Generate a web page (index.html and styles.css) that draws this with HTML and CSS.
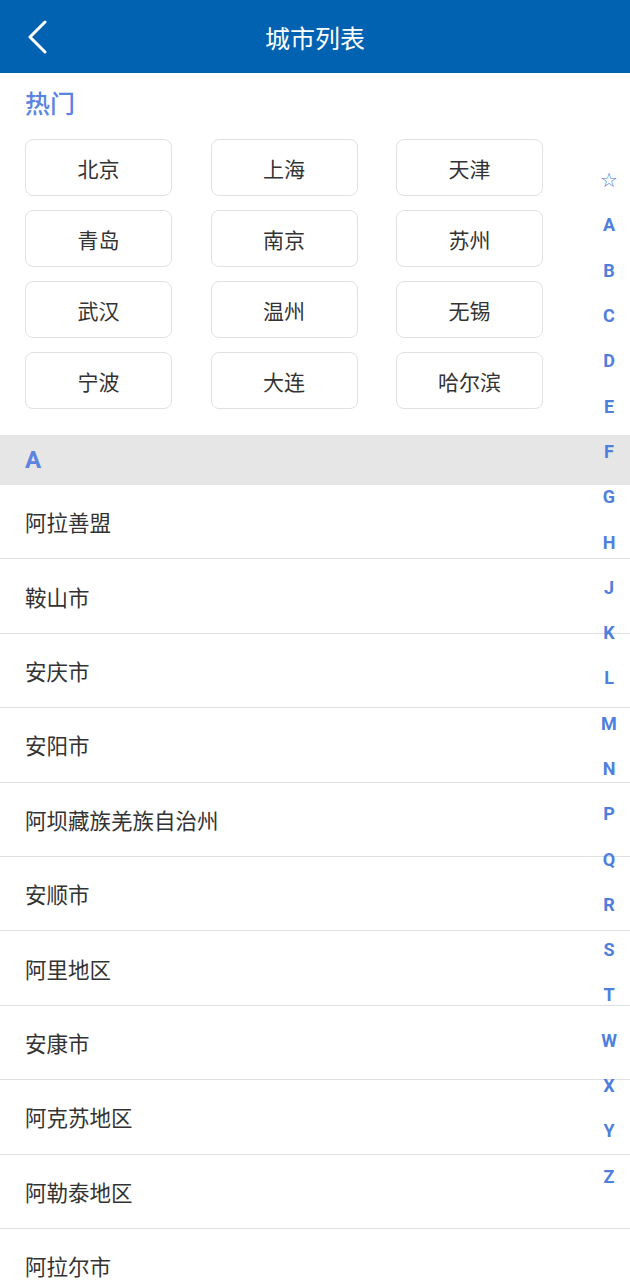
FILE: index.html
```html
<!DOCTYPE html>
<html lang="zh-CN">
<head>
<meta charset="utf-8">
<title>城市列表</title>
<link rel="stylesheet" href="styles.css">
</head>
<body>
<header class="topbar">
  <svg class="back" width="24" height="34" viewBox="0 0 24 34"><path d="M19 2 L4 17 L19 32" fill="none" stroke="#fff" stroke-width="3" stroke-linecap="round" stroke-linejoin="round"/></svg>
  <h1 class="title">城市列表</h1>
</header>
<section class="hot">
  <h2 class="hot-title">热门</h2>
  <div class="hot-grid">
    <div class="chip">北京</div><div class="chip">上海</div><div class="chip">天津</div>
    <div class="chip">青岛</div><div class="chip">南京</div><div class="chip">苏州</div>
    <div class="chip">武汉</div><div class="chip">温州</div><div class="chip">无锡</div>
    <div class="chip">宁波</div><div class="chip">大连</div><div class="chip">哈尔滨</div>
  </div>
</section>
<div class="group">A</div>
<ul class="list">
  <li>阿拉善盟</li>
  <li>鞍山市</li>
  <li>安庆市</li>
  <li>安阳市</li>
  <li>阿坝藏族羌族自治州</li>
  <li>安顺市</li>
  <li>阿里地区</li>
  <li>安康市</li>
  <li>阿克苏地区</li>
  <li>阿勒泰地区</li>
  <li>阿拉尔市</li>
</ul>
<nav class="index">
  <span class="star">☆</span><span>A</span><span>B</span><span>C</span><span>D</span><span>E</span><span>F</span><span>G</span><span>H</span><span>J</span><span>K</span><span>L</span><span>M</span><span>N</span><span>P</span><span>Q</span><span>R</span><span>S</span><span>T</span><span>W</span><span>X</span><span>Y</span><span>Z</span>
</nav>
</body>
</html>
```
FILE: styles.css
```css
* { box-sizing: border-box; }
html, body { margin: 0; padding: 0; }
body {
  width: 630px;
  height: 1280px;
  overflow: hidden;
  background: #fff;
  font-family: "Noto Sans CJK SC", "Noto Sans", sans-serif;
  color: #333;
  position: relative;
}
.topbar {
  height: 73px;
  background: #0062b1;
  display: flex;
  align-items: center;
  justify-content: center;
  position: relative;
}
.back {
  position: absolute;
  left: 26px;
  top: 20px;
}
.title {
  margin: 0;
  font-size: 25px;
  font-weight: 400;
  color: #fff;
  line-height: 30px;
}
.hot {
  padding: 14px 0 26px 25px;
}
.hot-title {
  margin: 0 0 22px;
  font-size: 25px;
  line-height: 30px;
  font-weight: 500;
  color: #5b84e0;
}
.hot-grid {
  display: grid;
  grid-template-columns: repeat(3, 147px);
  grid-auto-rows: 57px;
  column-gap: 38.5px;
  row-gap: 14px;
}
.chip {
  border: 1.5px solid #e1e1e1;
  border-radius: 8px;
  display: flex;
  align-items: center;
  justify-content: center;
  font-size: 21px;
  color: #333;
}
.group {
  height: 50px;
  background: #e6e6e6;
  padding-left: 25px;
  display: flex;
  align-items: center;
  font-family: "Roboto", "Liberation Sans", sans-serif;
  font-weight: 700;
  font-size: 24px;
  color: #5b84e0;
}
.list {
  list-style: none;
  margin: 0;
  padding: 0;
}
.list li {
  height: 74.4px;
  border-bottom: 1px solid #e0e0e0;
  padding-left: 25px;
  display: flex;
  align-items: center;
  font-size: 21.5px;
  color: #333;
}
.index {
  position: absolute;
  top: 157px;
  right: 1px;
  width: 40px;
  display: flex;
  flex-direction: column;
}
.index span {
  height: 45.3px;
  display: flex;
  align-items: center;
  justify-content: center;
  font-family: "Roboto", "Liberation Sans", sans-serif;
  font-weight: 700;
  font-size: 18px;
  color: #4f7fdc;
}
.index .star {
  font-family: "DejaVu Sans", sans-serif;
  font-weight: 400;
  font-size: 20px;
}
```
